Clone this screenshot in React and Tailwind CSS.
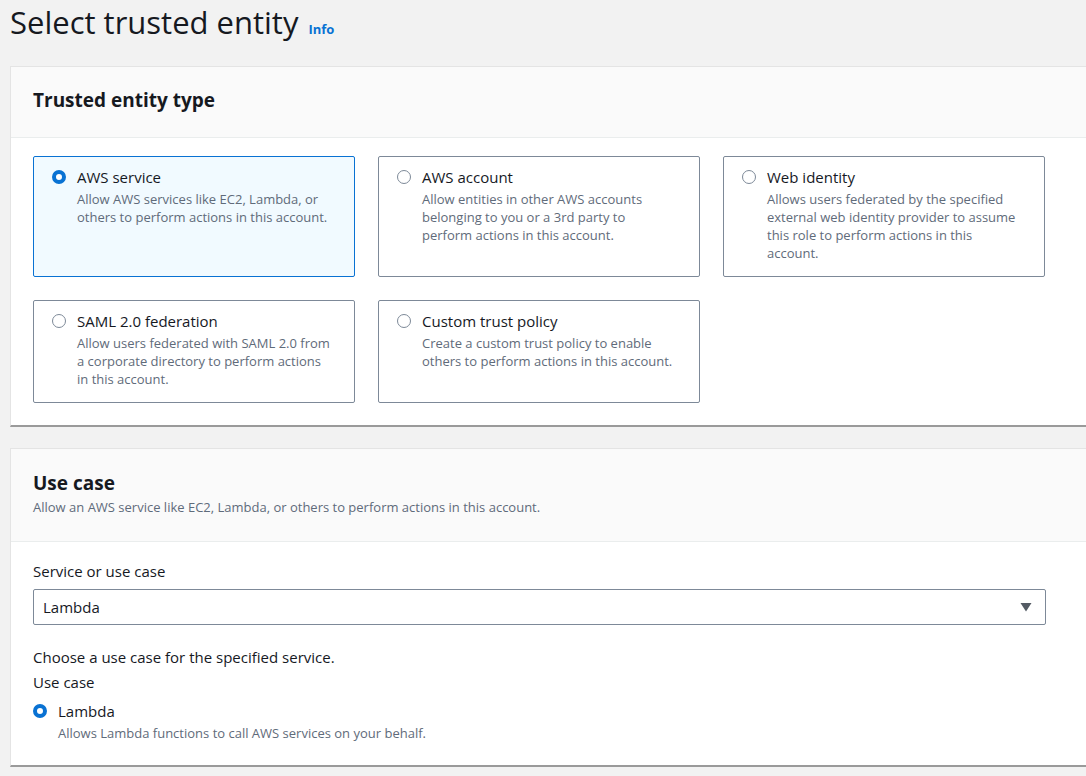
import React from "react";

const font = { fontFamily: '"Open Sans", "Noto Sans", Arial, sans-serif' };

function Radio({ checked }) {
  if (checked) {
    return (
      <span className="mt-[4px] box-border inline-block h-[14px] w-[14px] shrink-0 rounded-full border-[4px] border-[#0972d3] bg-white" />
    );
  }
  return (
    <span className="mt-[4px] box-border inline-block h-[14px] w-[14px] shrink-0 rounded-full border-[1.5px] border-[#7d8998] bg-white" />
  );
}

function Tile({ title, desc, checked, h }) {
  return (
    <div
      className={
        "box-border flex gap-[11px] rounded-[2px] border pl-[18px] pr-4 pt-[9px] " +
        (checked ? "border-[#0972d3] bg-[#f1faff]" : "border-[#7d8998] bg-white") +
        " " + h
      }
    >
      <Radio checked={checked} />
      <div>
        <div className="text-[15px] leading-[22px] text-[#16191f]">{title}</div>
        <div className="mt-[2px] text-[13px] leading-[18px] text-[#5f6b7a]">{desc}</div>
      </div>
    </div>
  );
}

export default function App() {
  return (
    <div className="h-[776px] w-[1086px] overflow-hidden bg-[#f2f2f2]" style={font}>
      <div className="flex items-baseline pl-[10px] pt-0">
        <h1 className="text-[31px] leading-[44px] text-[#16191f]">Select trusted entity</h1>
        <span className="ml-[10px] text-[13px] font-bold text-[#0972d3]">Info</span>
      </div>

      <div className="ml-[10px] mt-[22px] w-[1120px] border border-b-2 border-[#e4e4e4] border-b-[#9a9a9a] bg-white">
        <div className="border-b border-[#eaeded] bg-[#fafafa] px-[22px] pb-[24px] pt-[20px]">
          <h2 className="text-[19px] font-bold leading-[26px] text-[#16191f]">Trusted entity type</h2>
        </div>
        <div className="px-[22px] pb-[22px] pt-[18px]">
          <div className="grid grid-cols-[322px_322px_322px] gap-x-[23px] gap-y-[23px]">
            <Tile
              h="h-[121px]"
              checked
              title="AWS service"
              desc={<>Allow AWS services like EC2, Lambda, or<br />others to perform actions in this account.</>}
            />
            <Tile
              h="h-[121px]"
              title="AWS account"
              desc={<>Allow entities in other AWS accounts<br />belonging to you or a 3rd party to<br />perform actions in this account.</>}
            />
            <Tile
              h="h-[121px]"
              title="Web identity"
              desc={<>Allows users federated by the specified<br />external web identity provider to assume<br />this role to perform actions in this<br />account.</>}
            />
            <Tile
              h="h-[103px]"
              title="SAML 2.0 federation"
              desc={<>Allow users federated with SAML 2.0 from<br />a corporate directory to perform actions<br />in this account.</>}
            />
            <Tile
              h="h-[103px]"
              title="Custom trust policy"
              desc={<>Create a custom trust policy to enable<br />others to perform actions in this account.</>}
            />
          </div>
        </div>
      </div>

      <div className="ml-[10px] mt-[21px] w-[1120px] border border-b-2 border-[#e4e4e4] border-b-[#9a9a9a] bg-white">
        <div className="border-b border-[#eaeded] bg-[#fafafa] px-[22px] pb-[25px] pt-[21px]">
          <h2 className="text-[19px] font-bold leading-[26px] text-[#16191f]">Use case</h2>
          <p className="mt-[2px] text-[13px] leading-[18px] text-[#5f6b7a]">
            Allow an AWS service like EC2, Lambda, or others to perform actions in this account.
          </p>
        </div>
        <div className="px-[22px] pb-[23px] pt-[18px]">
          <div className="text-[15px] leading-[22px] text-[#16191f]">Service or use case</div>
          <div className="mt-[7px] flex h-[36px] w-[1013px] items-center justify-between rounded-[2px] border border-[#7d8998] bg-white pl-[9px] pr-[13px]">
            <span className="text-[15px] text-[#16191f]">Lambda</span>
            <svg width="12" height="10" viewBox="0 0 12 10">
              <path d="M0.5 1 L11.5 1 L6 9.5 Z" fill="#545b64" />
            </svg>
          </div>
          <div className="mt-[21px] text-[15px] leading-[22px] text-[#16191f]">
            Choose a use case for the specified service.
          </div>
          <div className="mt-[3px] text-[15px] leading-[22px] text-[#16191f]">Use case</div>
          <div className="mt-[7px] flex gap-[11px]">
            <Radio checked />
            <div>
              <div className="text-[15px] leading-[22px] text-[#16191f]">Lambda</div>
              <div className="mt-[2px] text-[13px] leading-[18px] text-[#5f6b7a]">
                Allows Lambda functions to call AWS services on your behalf.
              </div>
            </div>
          </div>
        </div>
      </div>
    </div>
  );
}
